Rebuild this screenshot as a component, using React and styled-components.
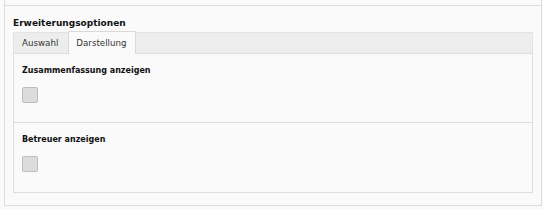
import React, { useState } from "react";
import styled, { createGlobalStyle } from "styled-components";

const Global = createGlobalStyle`
  html, body { margin: 0; padding: 0; background: #fafafa; }
  body { font-family: "DejaVu Sans", Verdana, sans-serif; font-size: 9px; color: #333; }
`;

const Page = styled.div`
  width: 543px;
  height: 209px;
  box-sizing: border-box;
  padding: 0 1px 3px 4px;
  background: #fafafa;
`;

const Panel = styled.div`
  height: 100%;
  box-sizing: border-box;
  border-left: 1px solid #dddddd;
  border-right: 1px solid #dddddd;
  border-bottom: 1px solid #dddddd;
  padding-top: 5px;
  display: flex;
  flex-direction: column;
`;

const Divider = styled.div`
  border-top: 1px solid #dddddd;
  margin: 0 -1px;
`;

const Section = styled.div`
  padding: 9px 8px 0 8px;
`;

const Heading = styled.div`
  font-weight: bold;
  font-size: 9px;
  color: #111;
  line-height: 16px;
`;

const TabBar = styled.div`
  display: flex;
  height: 21px;
  margin-top: 1px;
  background: #ededed;
  border: 1px solid #e3e3e3;
  border-bottom: none;
  box-sizing: border-box;
`;

const Tab = styled.button`
  font-family: inherit;
  font-size: 8.7px;
  color: #333;
  padding: ${p => (p.$active ? "0 8px 0 7px" : "0 10px 0 8px")};
  margin: ${p => (p.$active ? "-2px 0 -1px" : "0")};
  border: none;
  border-left: ${p => (p.$active ? "1px solid #d9d9d9" : "none")};
  border-right: ${p => (p.$active ? "1px solid #d9d9d9" : "none")};
  border-top: ${p => (p.$active ? "1px solid #d9d9d9" : "none")};
  background: ${p => (p.$active ? "#fafafa" : "transparent")};
  position: relative;
  z-index: 1;
  cursor: pointer;
  box-sizing: border-box;
  line-height: 20px;
`;

const TabContent = styled.div`
  border: 1px solid #dddddd;
  background: #fafafa;
`;

const Field = styled.div`
  padding: 10px 8px 19px 8px;
  & + & { border-top: 1px solid #dddddd; padding-bottom: 20px; }
`;

const Label = styled.div`
  font-weight: bold;
  font-size: 8px;
  color: #111;
  line-height: 14px;
  margin-bottom: 9px;
`;

const Check = styled.span`
  display: block;
  width: 16px;
  height: 16px;
  box-sizing: border-box;
  background: #dcdcdc;
  border: 1px solid #bdbdbd;
  border-radius: 2px;
`;

export default function App() {
  const [tab, setTab] = useState(1);
  return (
    <>
      <Global />
      <Page>
        <Panel>
          <Divider />
          <Section>
            <Heading>Erweiterungsoptionen</Heading>
            <TabBar>
              <Tab $active={tab === 0} onClick={() => setTab(0)}>Auswahl</Tab>
              <Tab $active={tab === 1} onClick={() => setTab(1)}>Darstellung</Tab>
            </TabBar>
            <TabContent>
              <Field>
                <Label>Zusammenfassung anzeigen</Label>
                <Check />
              </Field>
              <Field>
                <Label>Betreuer anzeigen</Label>
                <Check />
              </Field>
            </TabContent>
          </Section>
        </Panel>
      </Page>
    </>
  );
}
